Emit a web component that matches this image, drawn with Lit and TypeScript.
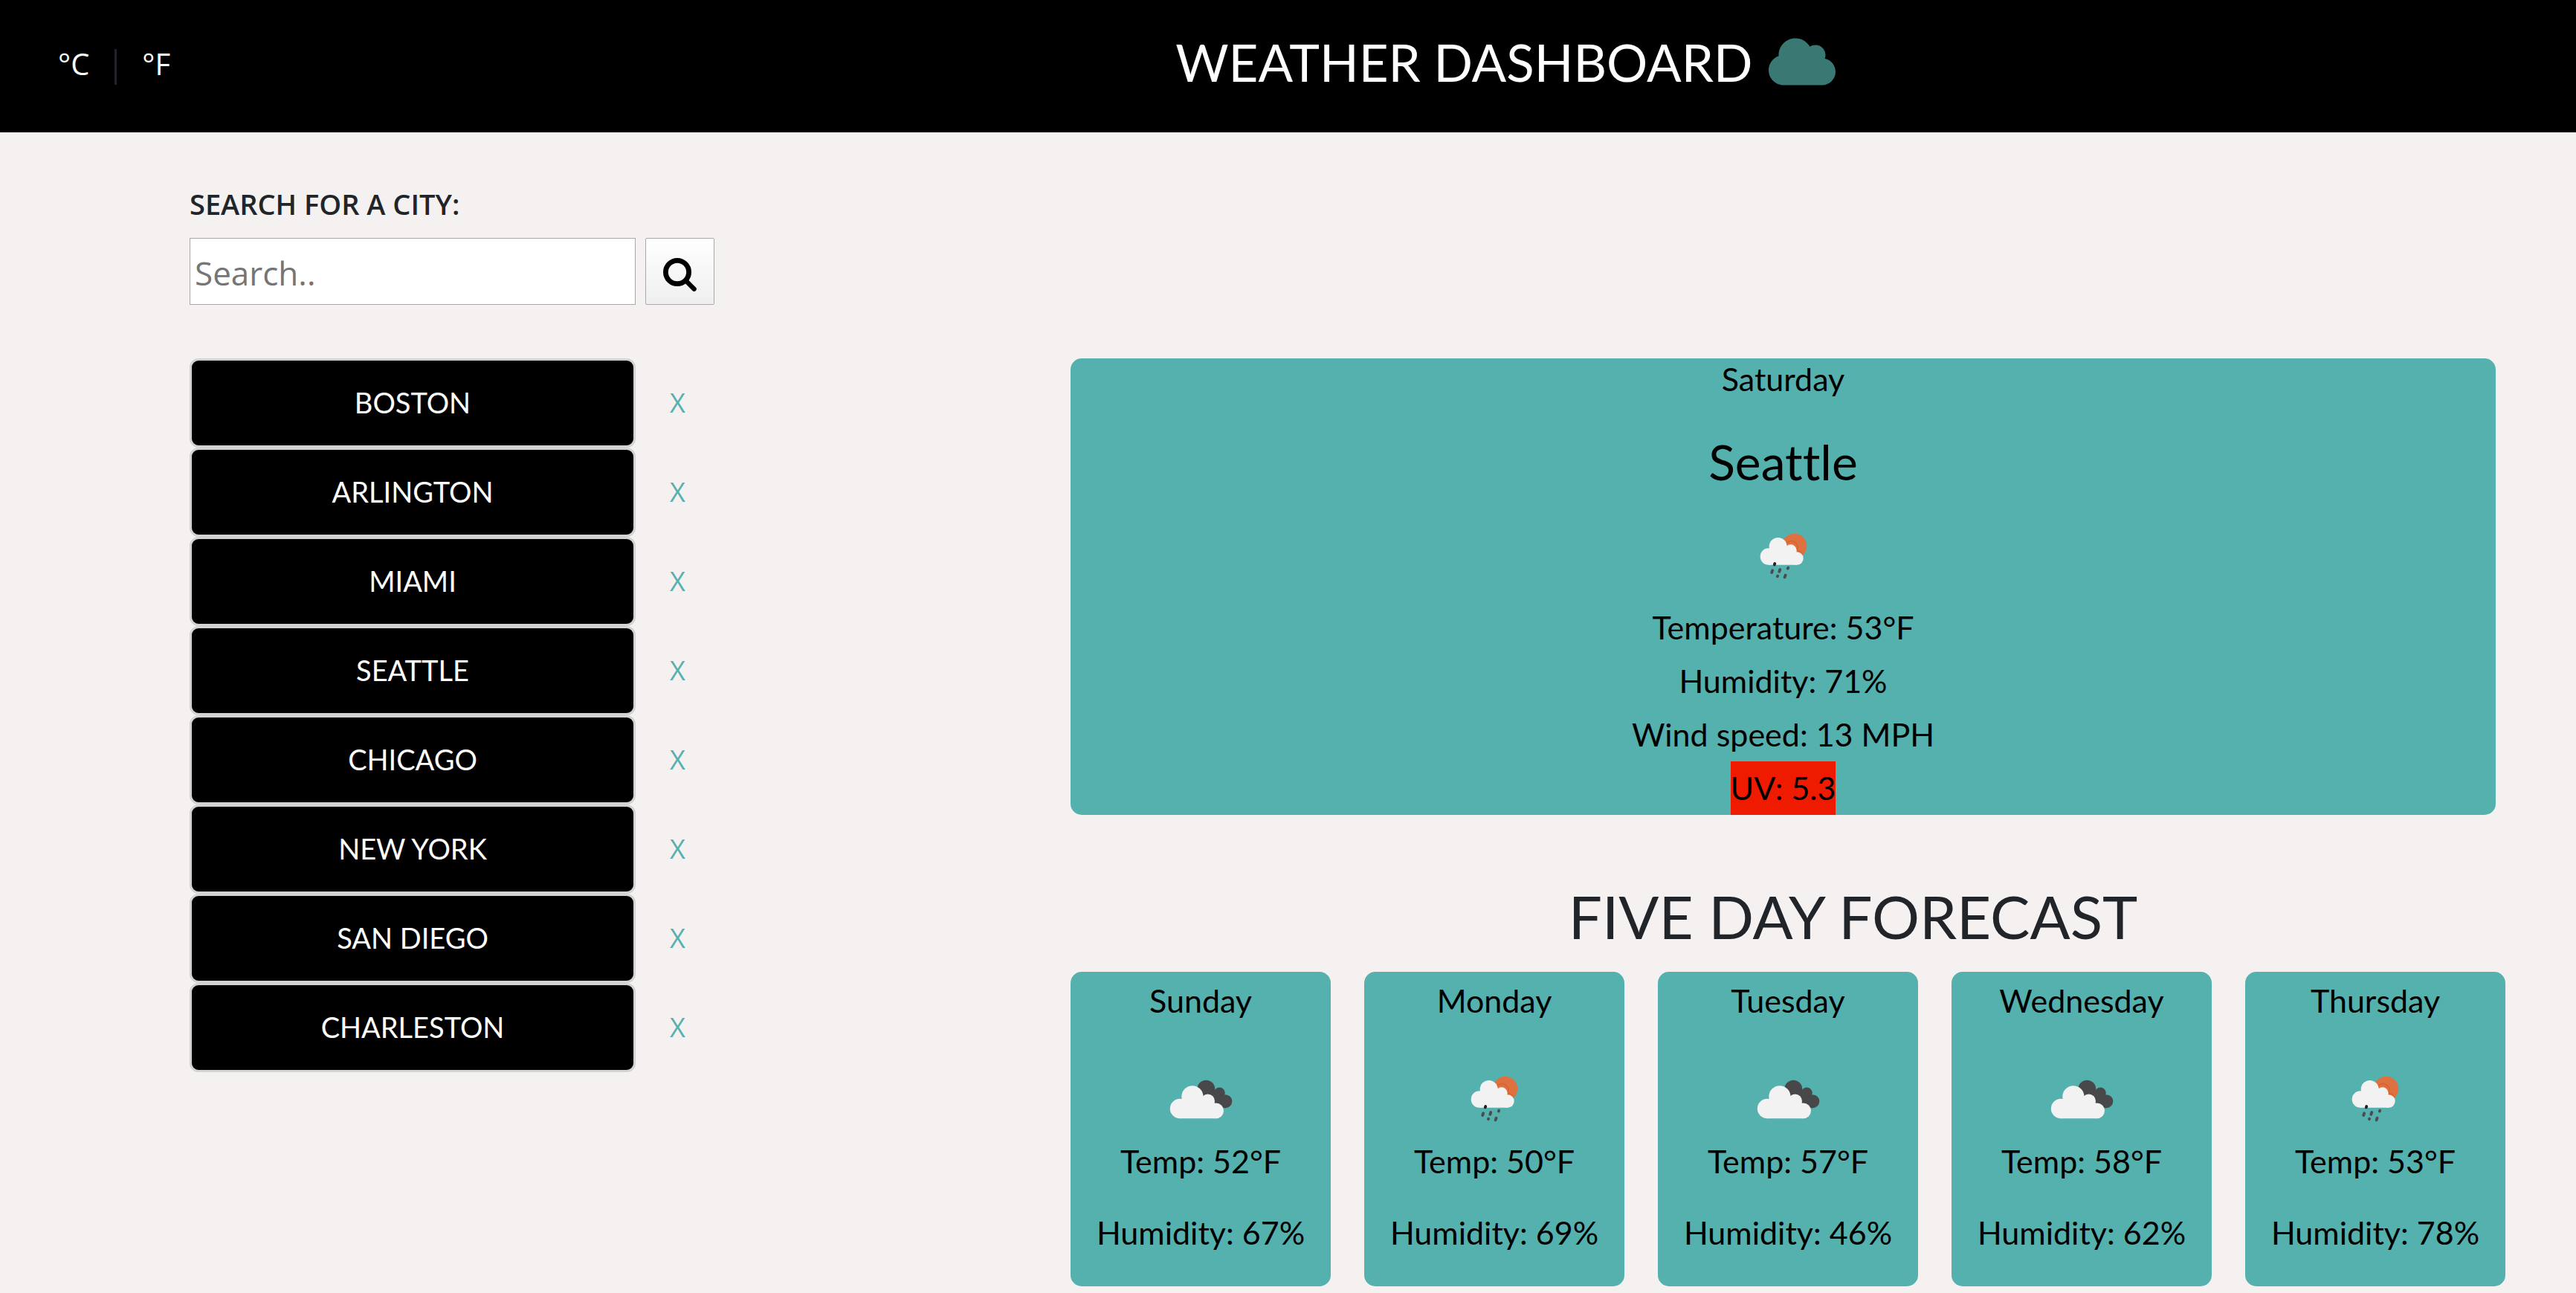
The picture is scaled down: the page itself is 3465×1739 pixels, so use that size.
import { LitElement, html, css, svg } from "lit";
import { customElement, property, state } from "lit/decorators.js";

type Condition = "rain" | "clouds";

interface ForecastDay {
  day: string;
  condition: Condition;
  temp: number;
  humidity: number;
}

const CITIES = ["Boston", "Arlington", "Miami", "Seattle", "Chicago", "New York", "San Diego", "Charleston"];

const FORECAST: ForecastDay[] = [
  { day: "Sunday", condition: "clouds", temp: 52, humidity: 67 },
  { day: "Monday", condition: "rain", temp: 50, humidity: 69 },
  { day: "Tuesday", condition: "clouds", temp: 57, humidity: 46 },
  { day: "Wednesday", condition: "clouds", temp: 58, humidity: 62 },
  { day: "Thursday", condition: "rain", temp: 53, humidity: 78 },
];

@customElement("weather-icon")
export class WeatherIcon extends LitElement {
  @property() condition: Condition = "clouds";

  static styles = css`
    :host {
      display: block;
      width: 100px;
      height: 100px;
    }
    .icon {
      display: block;
      width: 100%;
      height: 100%;
    }
    .sun {
      fill: #dd7140;
    }
    .sun-edge {
      fill: none;
      stroke: #e0602a;
      stroke-width: 1.5;
    }
    .white {
      fill: #f2f2f2;
    }
    .dark {
      fill: #48484a;
    }
    .drops {
      fill: none;
      stroke: #4c4c4f;
      stroke-width: 3.8;
      stroke-linecap: round;
    }
    .drop-top {
      stroke: #222;
    }
  `;

  private rain() {
    return svg`
      <circle class="sun" cx="64.7" cy="36.3" r="16.6"></circle>
      <path class="sun-edge" d="M53 34A8.4 8.4 0 0 1 68 42.5A9 9 0 0 1 75.5 48"></path>
      <g class="white">
        <circle cx="29.9" cy="50.5" r="11.2"></circle>
        <circle cx="42.7" cy="37" r="12"></circle>
        <circle cx="59.7" cy="42.3" r="8"></circle>
        <circle cx="68" cy="53" r="8.7"></circle>
        <path d="M29.9 61.7V42L42 34L58 38L68 46V61.7Z"></path>
      </g>
      <g class="drops">
        <path class="drop-top" d="M38.3 60L37.8 61.4"></path>
        <path d="M35.2 69.2L34.2 72M45.3 68L44.3 70.8M56.2 65.6L55.8 66.6M42.1 76.6L41.9 77.2M52.6 75.6L51.6 78.4"></path>
      </g>`;
  }

  private clouds() {
    return svg`
      <g class="dark">
        <circle cx="57.3" cy="36.7" r="12"></circle>
        <circle cx="75.3" cy="42" r="7.5"></circle>
        <circle cx="83.3" cy="53.2" r="9"></circle>
        <path d="M57 34L70 38L80 46L83.3 62.2H65Z"></path>
      </g>
      <g class="white">
        <circle cx="22" cy="63" r="13.2"></circle>
        <circle cx="38.9" cy="46.8" r="14.6"></circle>
        <circle cx="59.6" cy="53" r="9.4"></circle>
        <circle cx="70.6" cy="65.8" r="10.4"></circle>
        <path d="M22 76.2V54L38 44L60 48L70.6 57V76.2Z"></path>
      </g>`;
  }

  render() {
    return html`<svg class="icon" viewBox="0 0 100 100" aria-hidden="true">
      ${this.condition === "rain" ? this.rain() : this.clouds()}
    </svg>`;
  }
}

@customElement("app-root")
export class AppRoot extends LitElement {
  @state() private cities = CITIES;

  static styles = css`
    :host {
      --teal: #55b1ae;
      --ink: #212529;
      --display: Lato, "Gill Sans", sans-serif;
      --text: "Open Sans", "Noto Sans", sans-serif;
      display: block;
      min-height: 100vh;
      background: #f6f1f1;
      color: var(--ink);
      font-family: var(--text);
      font-variant-ligatures: none;
    }
    * {
      box-sizing: border-box;
    }
    button {
      margin: 0;
      padding: 0;
      border: 0;
      background: none;
      font-family: inherit;
      cursor: pointer;
    }
    h1, h2, h3, p, ul {
      margin: 0;
      padding: 0;
      font-size: inherit;
      font-weight: 400;
      list-style: none;
    }
    .header {
      display: grid;
      grid-template-columns: 1fr 5fr;
      min-height: 178px;
      background: #000;
      color: #fff;
    }
    .units {
      display: flex;
      align-items: flex-end;
      align-self: start;
      gap: 34px;
      padding: 62px 0 0 78px;
    }
    .unit {
      padding-bottom: 4px;
      color: #fff;
      font-size: 40px;
      line-height: 48px;
    }
    .divider {
      width: 3px;
      height: 48px;
      background: var(--ink);
    }
    .title {
      display: flex;
      justify-content: center;
      gap: 22px;
      padding: 40px 0 50px 8px;
      font-family: var(--display);
      font-size: 69px;
      line-height: 88px;
      text-transform: uppercase;
    }
    .title-icon {
      width: 90px;
      height: 86px;
      fill: #397873;
    }
    .main {
      display: grid;
      grid-template-columns: 706fr 479fr 2025fr;
      padding: 72px 0 0 255px;
    }
    .search {
      display: grid;
      grid-template-columns: 1fr 93px;
      column-gap: 13px;
      row-gap: 22px;
      margin-bottom: 72px;
    }
    .search-label {
      grid-column: 1 / -1;
      font-size: 38px;
      font-weight: 600;
      line-height: 48px;
    }
    .search-input {
      width: 100%;
      min-width: 0;
      height: 90px;
      margin: 0;
      padding: 4px 6px 0;
      border: 1px solid #a9a9a9;
      border-radius: 0;
      background: #fff;
      color: var(--ink);
      font-family: inherit;
      font-size: 44px;
    }
    .search-input::placeholder {
      color: #757575;
    }
    .search-button {
      display: grid;
      place-items: center;
      padding-top: 8px;
      border: 1px solid #a9a9a9;
      border-radius: 2px;
      background: linear-gradient(#fff, #efefef);
    }
    .search-icon {
      width: 45px;
      height: 45px;
      fill: none;
      stroke: #000;
      stroke-linecap: round;
    }
    .cities {
      grid-column: 1;
    }
    .city {
      display: grid;
      grid-template-columns: 1fr 93px;
      column-gap: 13px;
    }
    .city-name {
      height: 120px;
      padding-bottom: 2px;
      border: 3px solid #d3d3d3;
      border-radius: 12px;
      background: #000;
      color: #fff;
      font-family: var(--display);
      font-size: 38px;
      text-transform: uppercase;
    }
    .city-remove {
      padding: 0 6px 2px 0;
      color: var(--teal);
      font-size: 36px;
    }
    .weather {
      grid-column: 3;
      color: #000;
      font-family: var(--display);
      font-size: 43px;
      text-align: center;
    }
    .current {
      display: flex;
      flex-direction: column;
      align-items: center;
      margin-right: 108px;
      border-radius: 15px;
      background: var(--teal);
      line-height: 72px;
    }
    .current-day {
      line-height: 56px;
    }
    .current-city {
      margin: 40px 0 34px;
      font-size: 66px;
      line-height: 86px;
    }
    .current-icon {
      margin-bottom: 10px;
    }
    .uv {
      background: #ee1b00;
    }
    .forecast-title {
      margin: 88px 0 27px;
      padding-left: 80px;
      color: var(--ink);
      font-size: 80px;
      line-height: 96px;
      text-transform: uppercase;
    }
    .forecast {
      display: grid;
      grid-template-columns: repeat(5, 1fr);
      gap: 45px;
      margin-right: 95px;
    }
    .day {
      display: flex;
      flex-direction: column;
      align-items: center;
      padding: 5px 0 38px;
      border-radius: 15px;
      background: var(--teal);
      line-height: 68px;
    }
    .day-icon {
      margin-top: 48px;
    }
    .day-humidity {
      margin-top: 28px;
    }
  `;

  private remove(city: string) {
    this.cities = this.cities.filter((c) => c !== city);
  }

  private renderDay(d: ForecastDay) {
    return html`<li class="day">
      <h3>${d.day}</h3>
      <weather-icon class="day-icon" .condition=${d.condition}></weather-icon>
      <p>Temp: ${d.temp}°F</p>
      <p class="day-humidity">Humidity: ${d.humidity}%</p>
    </li>`;
  }

  render() {
    return html`
      <header class="header">
        <div class="units">
          <button class="unit" type="button">°C</button>
          <span class="divider"></span>
          <button class="unit" type="button">°F</button>
        </div>
        <h1 class="title">
          <span>Weather Dashboard</span>
          <svg class="title-icon" viewBox="0 0 640 512" aria-hidden="true">
            <path d="M537.6 226.6c4.1-10.7 6.4-22.4 6.4-34.6 0-53-43-96-96-96-19.7 0-38.1 6-53.3 16.2C367 64.2 315.3 32 256 32c-88.4 0-160 71.6-160 160 0 2.7.1 5.4.2 8.1C40.2 219.8 0 273.2 0 336c0 79.5 64.5 144 144 144h368c70.7 0 128-57.3 128-128 0-61.9-44-113.6-102.4-125.4z"></path>
          </svg>
        </h1>
      </header>
      <main class="main">
        <form class="search" @submit=${(e: Event) => e.preventDefault()}>
          <label class="search-label" for="city">SEARCH FOR A CITY:</label>
          <input class="search-input" id="city" type="text" placeholder="Search.." />
          <button class="search-button" type="submit" aria-label="Search">
            <svg class="search-icon" viewBox="0 0 45 45" aria-hidden="true">
              <circle cx="19" cy="19" r="15.6" stroke-width="6.8"></circle>
              <path d="M31 31L41.7 41.7" stroke-width="6.2"></path>
            </svg>
          </button>
        </form>
        <ul class="cities">
          ${this.cities.map(
            (city) => html`<li class="city">
              <button class="city-name" type="button">${city}</button>
              <button class="city-remove" type="button" @click=${() => this.remove(city)}>X</button>
            </li>`
          )}
        </ul>
        <section class="weather">
          <div class="current">
            <p class="current-day">Saturday</p>
            <h2 class="current-city">Seattle</h2>
            <weather-icon class="current-icon" .condition=${"rain"}></weather-icon>
            <p>Temperature: 53°F</p>
            <p>Humidity: 71%</p>
            <p>Wind speed: 13 MPH</p>
            <p class="uv">UV: 5.3</p>
          </div>
          <h2 class="forecast-title">Five Day Forecast</h2>
          <ul class="forecast">
            ${FORECAST.map((d) => this.renderDay(d))}
          </ul>
        </section>
      </main>
    `;
  }
}
